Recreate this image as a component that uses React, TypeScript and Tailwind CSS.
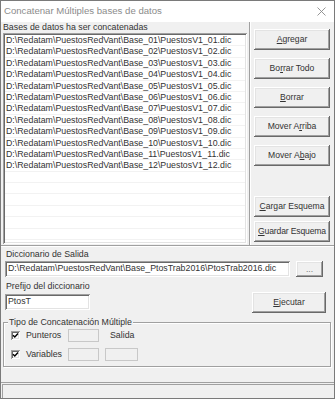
const files = Array.from({ length: 12 }, (_, i) => {
  const n = String(i + 1).padStart(2, "0");
  return `D:\\Redatam\\PuestosRedVant\\Base_${n}\\PuestosV1_${n}.dic`;
});

const raised =
  "bg-[#f0f0f0] shadow-[inset_-1px_-1px_#696969,inset_1px_1px_#ffffff,inset_-2px_-2px_#a0a0a0,inset_2px_2px_#e3e3e3]";
const sunken =
  "bg-white shadow-[inset_1px_1px_#a0a0a0,inset_-1px_-1px_#ffffff,inset_2px_2px_#696969,inset_-2px_-2px_#e3e3e3]";

function Btn({
  children,
  className = "",
}: {
  children: React.ReactNode;
  className?: string;
}) {
  return (
    <div
      className={`${raised} flex items-center justify-center leading-none whitespace-nowrap text-[8.6px] ${className}`}
    >
      {children}
    </div>
  );
}

function Check() {
  return (
    <div className={`${sunken} w-[9px] h-[9px] flex items-center justify-center`}>
      <svg width="7" height="7" viewBox="0 0 7 7">
        <path d="M1 3.2 L2.8 5 L6 1.5" fill="none" stroke="#000" strokeWidth="1.4" />
      </svg>
    </div>
  );
}

export default function App() {
  return (
    <div className="w-[335px] h-[399px] border border-[#7a7a7a] bg-[#f0f0f0] flex flex-col overflow-hidden font-['Liberation_Sans',Arial,sans-serif] text-[8.8px] text-[#333]">
      {/* title bar */}
      <div className="h-[21px] bg-white flex items-center justify-between pl-[3px] pr-[8px]">
        <span className="text-[9.6px] text-[#8c8c8c]">Concatenar Múltiples bases de datos</span>
        <svg width="9" height="9" viewBox="0 0 9 9">
          <path d="M0.5 0.5 L8.5 8.5 M8.5 0.5 L0.5 8.5" stroke="#8a8a8a" strokeWidth="0.9" />
        </svg>
      </div>

      {/* top panel */}
      <div className="h-[224px] flex border-b border-[#a0a0a0]">
        <div className="w-[249px] border-r border-[#a0a0a0] flex flex-col">
          <div className="leading-[11px] h-[11px] pl-[2px]">Bases de datos ha ser concatenadas</div>
          <div className={`${sunken} ml-[2px] w-[244px] h-[211px] p-[2px] overflow-hidden`}>
            {Array.from({ length: 19 }, (_, i) => (
              <div
                key={i}
                className="h-[11.4px] leading-[11px] pl-[1px] border-b border-[#f2f2f2] whitespace-nowrap"
              >
                {files[i] ?? ""}
              </div>
            ))}
          </div>
        </div>
        <div className="flex-1 border-l border-white pl-[3px] pt-[7px] flex flex-col">
          <div className="flex flex-col gap-[8px]">
            <Btn className="w-[76px] h-[21px]">
              <u>A</u>gregar
            </Btn>
            <Btn className="w-[76px] h-[21px]">
              Bo<u>r</u>rar Todo
            </Btn>
            <Btn className="w-[76px] h-[21px]">
              <u>B</u>orrar
            </Btn>
            <Btn className="w-[76px] h-[21px]">
              Mover A<u>r</u>riba
            </Btn>
            <Btn className="w-[76px] h-[21px]">
              Mover A<u>b</u>ajo
            </Btn>
          </div>
          <div className="mt-[30px] flex flex-col gap-[4px]">
            <Btn className="w-[76px] h-[21px]">
              <u>C</u>argar Esquema
            </Btn>
            <Btn className="w-[76px] h-[21px] tracking-[-0.15px]">
              <u>G</u>uardar Esquema
            </Btn>
          </div>
        </div>
      </div>

      {/* bottom panel */}
      <div className="flex-1 border-t border-white flex flex-col">
        <div className="mt-[2px] pl-[5px] leading-[11px] h-[11px]">Diccionario de Salida</div>
        <div className="mt-[1px] flex items-center pl-[4px]">
          <div className={`${sunken} w-[285px] h-[16px] pl-[3px] flex items-center whitespace-nowrap overflow-hidden`}>
            D:\Redatam\PuestosRedVant\Base_PtosTrab2016\PtosTrab2016.dic
          </div>
          <Btn className="ml-[6px] w-[27px] h-[16px] text-[#7a7a7a]">...</Btn>
        </div>
        <div className="mt-[4px] flex items-start">
          <div className="flex flex-col pl-[4px]">
            <div className="pl-[1px] leading-[11px] h-[11px]">Prefijo del diccionario</div>
            <div className={`${sunken} mt-[2px] w-[85px] h-[16px] pl-[3px] flex items-center`}>PtosT</div>
          </div>
          <Btn className="ml-auto mr-[8px] mt-[11px] w-[74px] h-[21px]">
            <u>E</u>jecutar
          </Btn>
        </div>

        <div className="relative mt-[9px] ml-[2px] w-[328px] h-[45px] border border-[#a0a0a0] shadow-[1px_1px_0_#ffffff,inset_1px_1px_0_#ffffff]">
          <span className="absolute -top-[6px] left-[4px] bg-[#f0f0f0] px-[1px] leading-[11px]">
            Tipo de Concatenación Múltiple
          </span>
          <div className="pt-[6px] pl-[7px] flex items-center h-[19px]">
            <Check />
            <span className="ml-[6px] w-[42px]">Punteros</span>
            <div className="w-[31px] h-[13px] border border-[#c8c8c8]" />
            <span className="ml-[11px]">Salida</span>
          </div>
          <div className="mt-[6px] pl-[7px] flex items-center h-[13px]">
            <Check />
            <span className="ml-[6px] w-[42px]">Variables</span>
            <div className="w-[31px] h-[13px] border border-[#c8c8c8]" />
            <div className="ml-[6px] w-[33px] h-[13px] border border-[#c8c8c8]" />
          </div>
        </div>
        <div className="flex-1" />
      </div>

      {/* status bar */}
      <div className="h-[16px] border-t border-[#a0a0a0] pt-[1px] pl-[1px]">
        <div className="h-full border-t border-l border-[#a0a0a0] bg-[#f0f0f0]" />
      </div>
    </div>
  );
}
